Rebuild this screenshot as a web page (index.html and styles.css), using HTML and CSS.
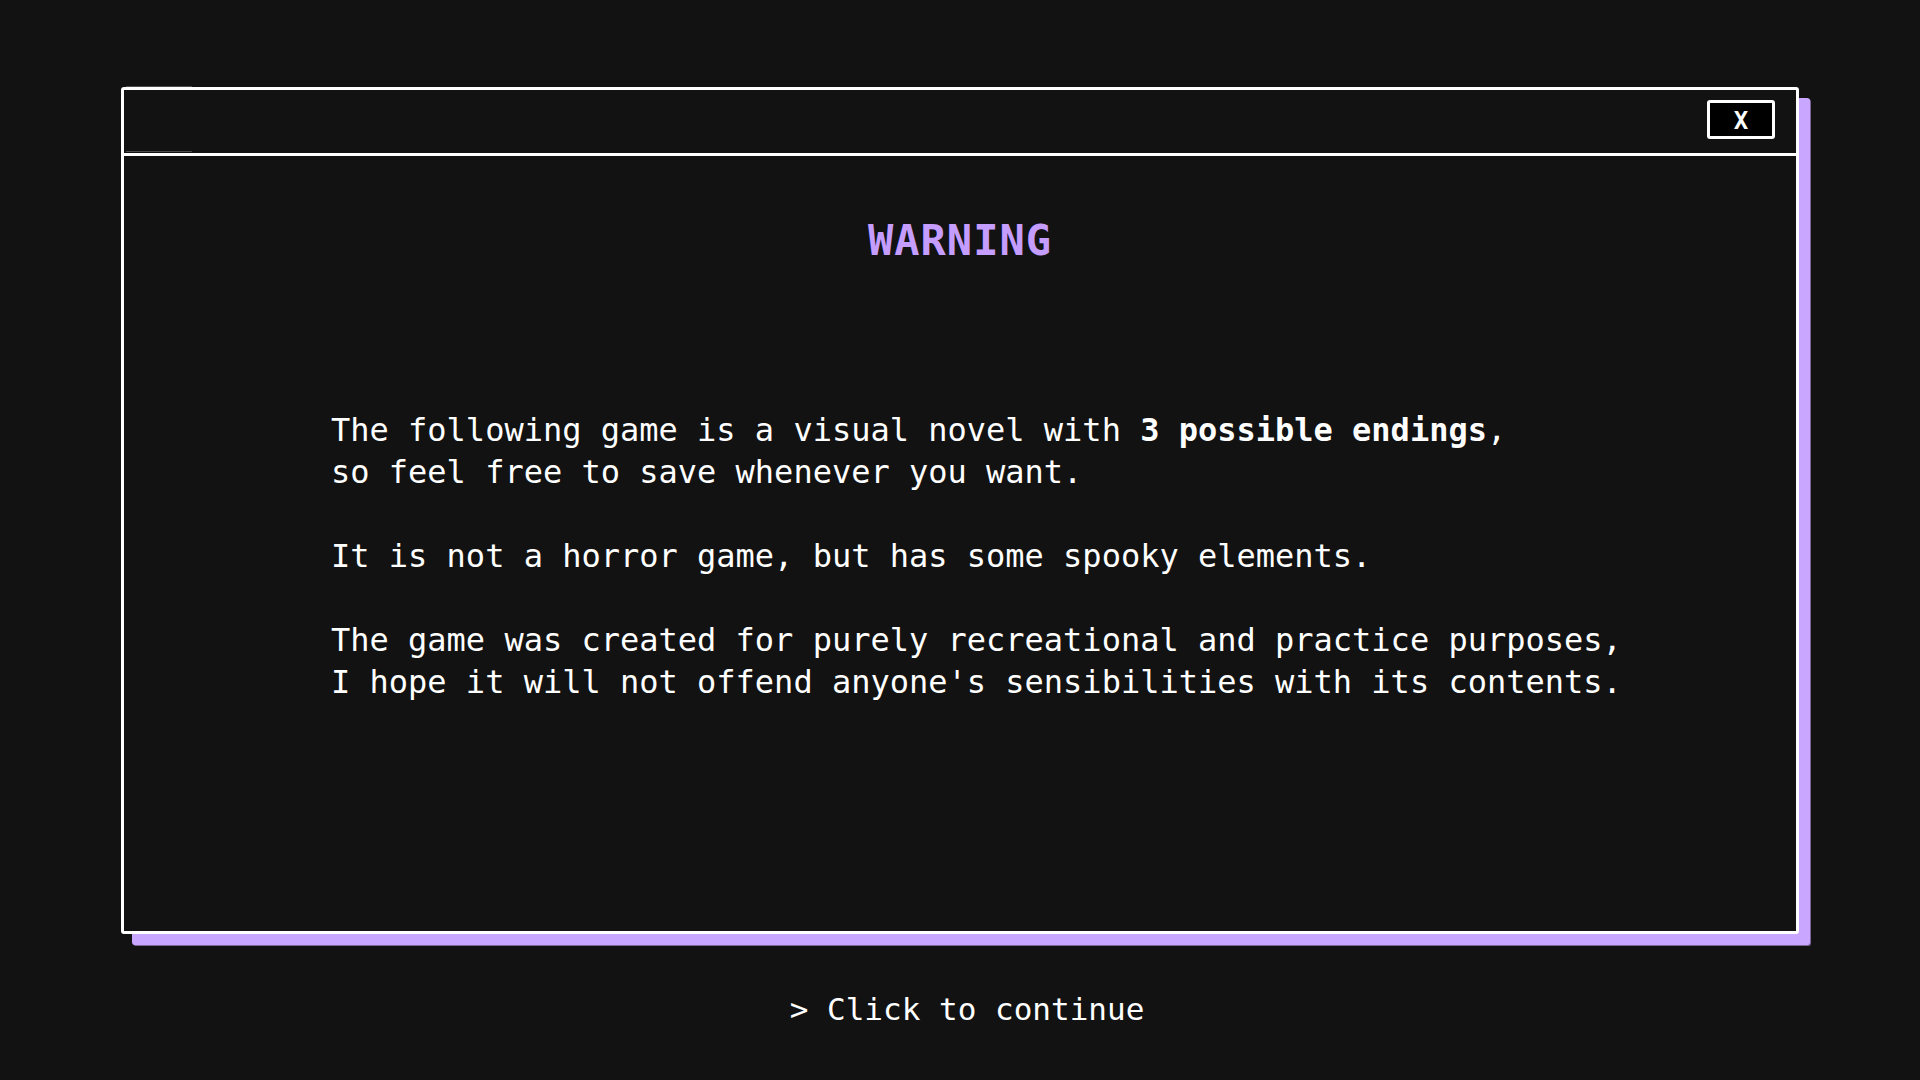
FILE: index.html
```html
<!DOCTYPE html>
<html lang="en">
<head>
<meta charset="utf-8">
<title>Warning</title>
<link rel="stylesheet" href="styles.css">
</head>
<body>
<main class="screen">
  <section class="window">
    <header class="titlebar">
      <button class="close" type="button" aria-label="Close">X</button>
    </header>
    <div class="content">
      <h1 class="title">WARNING</h1>
      <div class="message">
        <p>The following game is a visual novel with <strong>3 possible endings</strong>,<br>so feel free to save whenever you want.</p>
        <p>It is not a horror game, but has some spooky elements.</p>
        <p>The game was created for purely recreational and practice purposes,<br>I hope it will not offend anyone's sensibilities with its contents.</p>
      </div>
    </div>
  </section>
  <div class="continue">&gt; Click to continue</div>
</main>
</body>
</html>
```

FILE: styles.css
```css
html, body {
  margin: 0;
  padding: 0;
  background: #121212;
  color: #ffffff;
  font-family: "DejaVu Sans Mono", "Liberation Mono", monospace;
}

.screen {
  width: 1920px;
  height: 1080px;
  display: flex;
  flex-direction: column;
  align-items: center;
  box-sizing: border-box;
  padding-top: 87px;
}

.window {
  position: relative;
  width: 1678px;
  height: 847px;
  box-sizing: border-box;
  border: 3px solid #ffffff;
  border-radius: 3px;
  background: #121212;
  box-shadow: 11px 11px 0 0 #c9a6ff, 12px 12px 0 0 #7d6599;
  display: flex;
  flex-direction: column;
}

.window::before {
  content: "";
  position: absolute;
  top: -4px;
  left: 2px;
  width: 66px;
  height: 1px;
  background: #4d4d4d;
}

.titlebar {
  position: relative;
  height: 53px;
  border-bottom: 3px solid #ffffff;
  display: flex;
  justify-content: flex-end;
  align-items: flex-start;
  padding: 10px 21px 0 0;
  box-sizing: content-box;
}

.titlebar::before {
  content: "";
  position: absolute;
  bottom: 1px;
  left: 2px;
  width: 66px;
  height: 1px;
  background: #4d4d4d;
}

.close {
  width: 68px;
  height: 39px;
  box-sizing: border-box;
  border: 3px solid #ffffff;
  border-radius: 3px;
  background: #000000;
  color: #ffffff;
  font-family: "DejaVu Sans Mono", monospace;
  font-weight: bold;
  font-size: 24px;
  line-height: 37px;
  padding: 0;
  text-align: center;
}

.content {
  flex: 1;
  display: flex;
  flex-direction: column;
  padding-top: 60px;
}

.title {
  margin: 0;
  text-align: center;
  font-size: 42px;
  line-height: 50px;
  font-weight: bold;
  letter-spacing: 1px;
  color: #c49dff;
}

.message {
  margin-top: 143px;
  padding-left: 207px;
  font-size: 32px;
  line-height: 42px;
}

.message p {
  margin: 0 0 42px 0;
}

.message strong {
  font-weight: bold;
}

.continue {
  margin-top: 54px;
  padding-left: 14px;
  font-size: 31px;
  line-height: 42px;
  text-align: center;
}
```
